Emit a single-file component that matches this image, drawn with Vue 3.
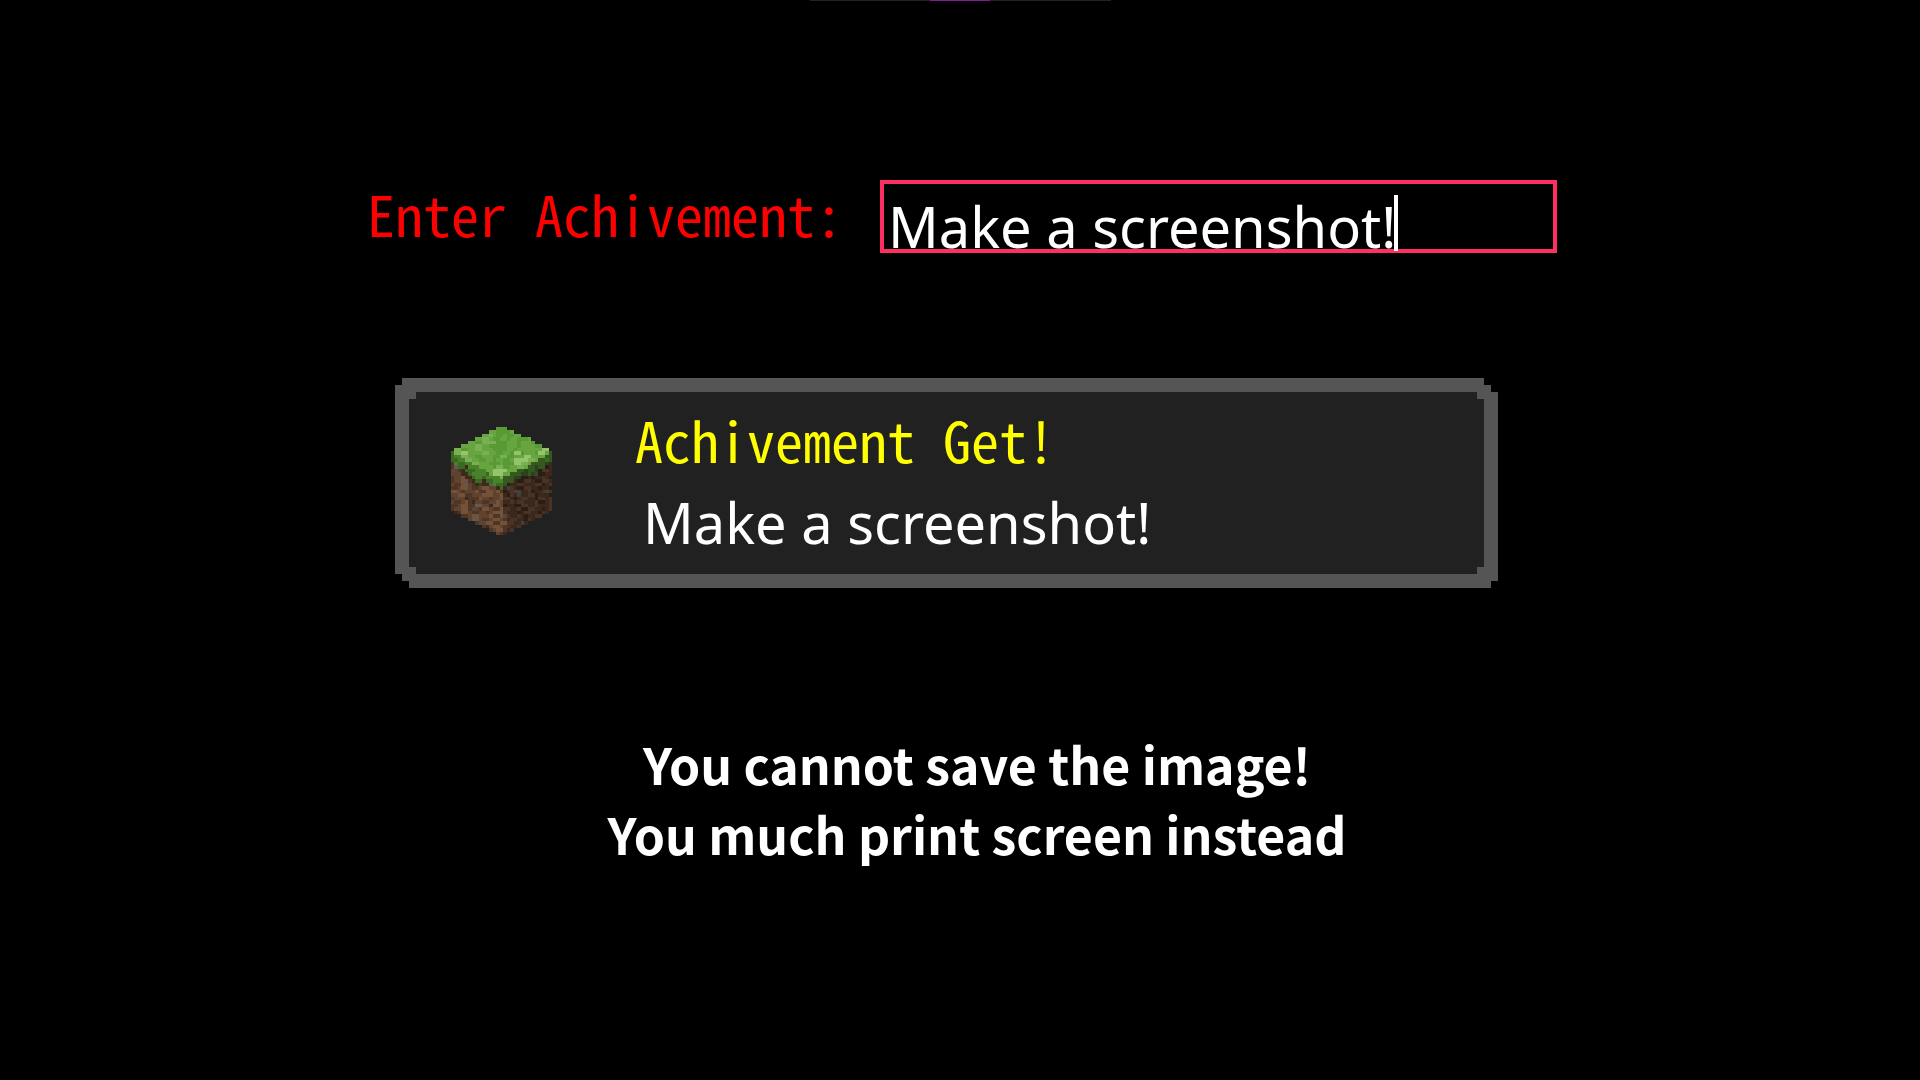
<script setup>
import { ref } from 'vue'

const title = ref('Make a screenshot!')

const palette = {
  a: '#5a9a35', b: '#67a541', c: '#79b053', d: '#96c46c',
  e: '#4a812b', f: '#3a6a22', g: '#34581f', h: '#28451a',
  l: '#74523a', m: '#60432f', n: '#4e3626', o: '#3d291c', s: '#5d5a58',
  p: '#4a3324', q: '#3b281c', r: '#2c1d13', t: '#42403f'
}

const rows = [
  '.............aaa.............',
  '...........bbaaaab...........',
  '.........bbcbaabaabb.........',
  '.......bbccbaabbabbaaab......',
  '.....bbaaccccaaabbbabbba.....',
  '...bbbbccbbaaaaabbbabbbbaa...',
  '.ccaabbccbbbaaaabbabbbbbbbdd.',
  'fccddbbbbccbbaabbaddabbbaddbg',
  'feeccbbaabbbaaccaabbbddbbbbgg',
  'ffeeccbbaabbabbaabddddccbggfg',
  'neffeeccbbbaaabaaaddccbgggghq',
  'nsffoeeebbbbaccaabbccbgghggrq',
  'mmnofffeeebbddddbbbgghgghrppq',
  'mmmoofeeeefbdddbbggghhghtrrqq',
  'nmmloofeefeeeecggghhrrqrqqpqr',
  'nmmllnoffoffeeegggqrrppqrrppq',
  'mnnlsmnonooseffgrqqppqqqpprqp',
  'nnmllmnnmllmmofotpqrrppqqrqqr',
  'llmnmmmlnnllmlnrqpttqqprqqptp',
  'mmllnnmmmlllmmlqrpqtqqpprqqqr',
  'nmmmonnnlmmnmmlppqrqppqqrppqp',
  'mnnmlnommnnmmlmqqpqppqqqprrqp',
  'nnmllnnssmmollmrqqrrppqqpqqqp',
  'nmmllnmmnllmnnlppqqprrppqqrqp',
  '.onllmnnmmnmllspqqqrqppqqrpq.',
  '...nnmllmmmlnnlmpqqpqrqqpp...',
  '.....mssmnnmllmnqppqqrpq.....',
  '.......nmmllnnllppqqtq.......',
  '.........nomllmnpqqp.........',
  '...........nmllnqp...........',
  '.............mnq.............'
]

const cells = rows.flatMap((row, y) =>
  [...row].map((key, x) => ({ x, y, fill: palette[key] })).filter((cell) => cell.fill)
)
</script>

<template>
  <main class="page">
    <div class="strip"><span class="strip-mark"></span></div>

    <form class="entry" @submit.prevent>
      <label class="pixel-text" for="achievement">Enter Achivement:</label>
      <div class="field">
        <input id="achievement" v-model="title" type="text" autocomplete="off" spellcheck="false" />
        <span class="caret" aria-hidden="true"></span>
      </div>
    </form>

    <section class="toast">
      <div class="toast-body">
        <svg class="block" viewBox="0 0 29 31" preserveAspectRatio="none" shape-rendering="crispEdges" aria-hidden="true">
          <rect v-for="cell in cells" :key="`${cell.x}-${cell.y}`" :x="cell.x" :y="cell.y" width="1" height="1" :fill="cell.fill" />
        </svg>
        <div class="toast-text">
          <h1 class="pixel-text">Achivement Get!</h1>
          <p>{{ title }}</p>
        </div>
      </div>
    </section>

    <p class="note">You cannot save the image!<br />You much print screen instead</p>
  </main>
</template>

<style>
body {
  margin: 0;
  background: #000;
}
</style>

<style scoped>
.page {
  box-sizing: border-box;
  min-height: 100vh;
  padding: 0 363px;
  background: #000;
  color: #fff;
  font-family: "Noto Sans", "Open Sans", sans-serif;
  font-size: 56px;
}

.strip {
  display: flex;
  justify-content: center;
  width: 301px;
  height: 1px;
  margin: 0 auto;
  background: #222;
}

.strip-mark {
  width: 60px;
  background: #8a1a9c;
}

.entry {
  display: flex;
  align-items: flex-start;
  gap: 37px;
  margin-top: 179px;
  padding-left: 4px;
}

.pixel-text {
  font-family: "Noto Sans Mono CJK JP", "Noto Sans Mono CJK SC", "Liberation Mono", monospace;
  font-size: 56px;
  font-weight: 400;
  white-space: pre;
}

.entry label {
  color: #f00;
  line-height: 66px;
}

.field {
  position: relative;
  flex: 1;
  min-width: 0;
}

input {
  display: block;
  box-sizing: border-box;
  width: 100%;
  height: 73px;
  padding: 18px 4px 0;
  border: 4px solid #ff2e63;
  border-radius: 0;
  outline: 0;
  background: #000;
  color: #fff;
  font: inherit;
  line-height: 50px;
}

.caret {
  position: absolute;
  top: 15px;
  left: 514px;
  width: 4px;
  height: 56px;
  background: #fff;
}

.toast {
  margin: 125px 59px 0 32px;
  padding: 14px;
  background: #555;
  clip-path: polygon(
    7px 0, calc(100% - 14px) 0, calc(100% - 14px) 7px, calc(100% - 7px) 7px, calc(100% - 7px) 14px, 100% 14px,
    100% calc(100% - 7px), calc(100% - 7px) calc(100% - 7px), calc(100% - 7px) 100%,
    14px 100%, 14px calc(100% - 7px), 7px calc(100% - 7px), 7px calc(100% - 14px), 0 calc(100% - 14px),
    0 7px, 7px 7px
  );
}

.toast-body {
  display: flex;
  align-items: flex-start;
  gap: 83px;
  padding: 10px 42px;
  background: #212121;
  clip-path: polygon(
    7px 0, calc(100% - 7px) 0, calc(100% - 7px) 7px, 100% 7px,
    100% calc(100% - 7px), calc(100% - 7px) calc(100% - 7px), calc(100% - 7px) 100%,
    7px 100%, 7px calc(100% - 7px), 0 calc(100% - 7px),
    0 7px, 7px 7px
  );
}

.block {
  flex: none;
  width: 101px;
  height: 108px;
  margin-top: 25px;
}

.toast-text h1 {
  margin: 0;
  color: #ff0;
  line-height: 74px;
}

.toast-text p {
  margin: 0;
  padding: 5px 0 1px 8px;
  line-height: 82px;
}

.note {
  margin: 140px 0 0;
  padding-left: 34px;
  font-family: "Noto Sans CJK JP", sans-serif;
  font-size: 50px;
  font-weight: 700;
  line-height: 70px;
  text-align: center;
}
</style>
